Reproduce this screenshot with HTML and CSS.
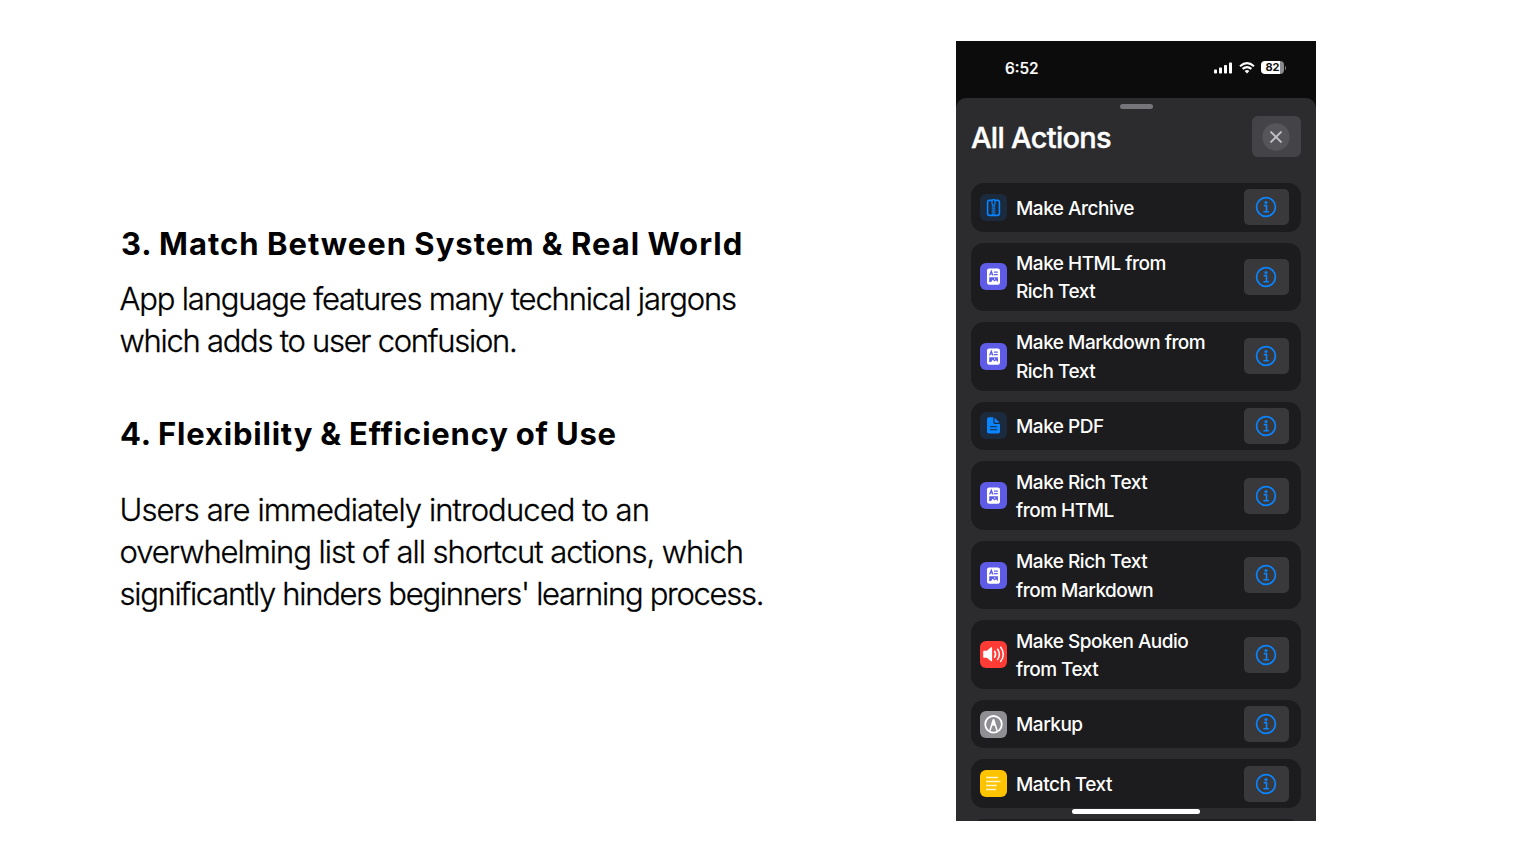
FILE: index.html
```html
<!DOCTYPE html>
<html lang="en">
<head>
<meta charset="utf-8">
<title>Heuristic evaluation</title>
<link rel="stylesheet" href="styles.css">
</head>
<body>
<svg class="defs" aria-hidden="true">
  <symbol id="info" viewBox="0 0 22 22"><circle cx="11" cy="11" r="9.400" fill="none" stroke="#0a84ff" stroke-width="1.700"/><circle cx="11" cy="6.400" r="1.500" fill="#0a84ff"/><path d="M8.800 9.600h2.700v6M8.400 15.700h5.500" fill="none" stroke="#0a84ff" stroke-width="1.600"/></symbol>
  <symbol id="zip" viewBox="0 0 27 27"><rect x="7.600" y="6.400" width="11.800" height="15" rx="1.800" fill="none" stroke="#0a84ff" stroke-width="1.600"/><path d="M13.500 11.500v9.500" stroke="#0a84ff" stroke-width="3.600" stroke-dasharray="1.200 .8"/><rect x="12" y="5.700" width="3" height="5.400" rx="1.500" fill="#1b2a3d" stroke="#0a84ff" stroke-width="1.200"/></symbol>
  <symbol id="rich" viewBox="0 0 27 27"><rect x="7" y="5.400" width="13" height="16.400" rx="2.200" fill="#fff"/><path d="M9.600 12.400l1.700-4.200 1.700 4.200M10.200 11h2.200M14 9.200h3.800M14 11.600h3.800" fill="none" stroke="#5e5ce6" stroke-width="1.200"/><path d="M9.200 14.200h8.700v5.100l-1.900-2.100-1.400 1.200-1.900-1.700-1.600 2.300H9.200z" fill="#5e5ce6"/><circle cx="14.600" cy="15.900" r=".7" fill="#fff"/></symbol>
  <symbol id="pdf" viewBox="0 0 27 27"><path d="M8.800 5.200h4.500v5.400a1.400 1.400 0 0 0 1.400 1.400H20v7.800a1.800 1.800 0 0 1-1.800 1.800H8.800A1.800 1.800 0 0 1 7 19.800V7a1.800 1.800 0 0 1 1.800-1.800z" fill="#0a84ff"/><path d="M14.500 5.400l5.200 5.400h-4.500a.7.7 0 0 1-.7-.7z" fill="#0a84ff"/><path d="M10 14.700h7M10 17.800h7" stroke="#1b2a3d" stroke-width="1.100"/></symbol>
  <symbol id="audio" viewBox="0 0 27 27"><path d="M3.200 10.500q0-.8.8-.8h2.800l4-3.300q1.300-.8 1.300.6v12.400q0 1.400-1.300.6l-4-3.300H4q-.8 0-.8-.8z" fill="#fff"/><path d="M14.600 10.300q2.100 3 0 6M17.600 8.200q3.700 5 0 10.200M20.700 6.200q5.300 7 0 14.200" fill="none" stroke="#fff" stroke-width="1.500" stroke-linecap="round"/></symbol>
  <symbol id="markup" viewBox="0 0 27 27"><circle cx="13.500" cy="13.300" r="8.300" fill="none" stroke="#fff" stroke-width="1.800"/><path d="M9.900 19.800l3.300-10.800h.6l3.300 10.800" fill="none" stroke="#fff" stroke-width="1.500"/><path d="M11.300 15.500l2.200-8 2.200 8-2.200-1.200z" fill="#fff"/></symbol>
  <symbol id="text" viewBox="0 0 27 27"><path d="M6 7.500h12M6 11.500h14.500M6 15.500h11M6 19.500h10" stroke="#fff6d0" stroke-width="1.700"/></symbol>
</svg>
<main class="slide">
  <section class="notes">
    <h2 class="head head-match">3. Match Between System &amp; Real World</h2>
    <p class="para"><span class="line l1">App language features many technical jargons</span><span class="line l2">which adds to user confusion.</span></p>
    <h2 class="head head-flex">4. Flexibility &amp; Efficiency of Use</h2>
    <p class="para para-last"><span class="line l3">Users are immediately introduced to an</span><span class="line l4">overwhelming list of all shortcut actions, which</span><span class="line l5">significantly hinders beginners' learning process.</span></p>
  </section>
  <section class="phone">
    <header class="status">
      <span class="time">6:52</span>
      <div class="indicators">
        <svg class="signal" viewBox="0 0 18 12"><rect y="7.500" width="3" height="4" rx=".8"/><rect x="5" y="5.500" width="3" height="6" rx=".8"/><rect x="10" y="3" width="3" height="8.500" rx=".8"/><rect x="15" y=".5" width="3" height="11" rx=".8"/></svg>
        <svg class="wifi" viewBox="0 0 16 12"><path d="M1 4.200q7-6 14 0M3.600 6.900q4.400-3.700 8.800 0" fill="none" stroke="#fff" stroke-width="2.100"/><path d="M5.600 9q2.400-1.800 4.800 0L8 11.500z"/></svg>
        <div class="battery"><span class="level">82</span></div><i class="cap"></i>
      </div>
    </header>
    <div class="sheet">
      <i class="grabber"></i>
      <div class="title-row">
        <h1 class="title">All Actions</h1>
        <button class="close"><svg viewBox="0 0 28 28"><circle cx="14" cy="14" r="13.700" fill="#55555a"/><path d="M9.100 9.100l9.800 9.800M18.900 9.100l-9.800 9.800" stroke="#c0c0c6" stroke-width="2" stroke-linecap="round"/></svg></button>
      </div>
      <div class="list">
        <div class="row"><svg class="icon navy"><use href="#zip"/></svg><span class="label">Make Archive</span><button class="info"><svg><use href="#info"/></svg></button></div>
        <div class="row tall"><svg class="icon purple"><use href="#rich"/></svg><span class="label">Make HTML from<br>Rich Text</span><button class="info"><svg><use href="#info"/></svg></button></div>
        <div class="row tall"><svg class="icon purple"><use href="#rich"/></svg><span class="label">Make Markdown from<br>Rich Text</span><button class="info"><svg><use href="#info"/></svg></button></div>
        <div class="row"><svg class="icon navy"><use href="#pdf"/></svg><span class="label">Make PDF</span><button class="info"><svg><use href="#info"/></svg></button></div>
        <div class="row tall"><svg class="icon purple"><use href="#rich"/></svg><span class="label">Make Rich Text<br>from HTML</span><button class="info"><svg><use href="#info"/></svg></button></div>
        <div class="row tall"><svg class="icon purple"><use href="#rich"/></svg><span class="label">Make Rich Text<br>from Markdown</span><button class="info"><svg><use href="#info"/></svg></button></div>
        <div class="row tall"><svg class="icon red"><use href="#audio"/></svg><span class="label">Make Spoken Audio<br>from Text</span><button class="info"><svg><use href="#info"/></svg></button></div>
        <div class="row"><svg class="icon gray"><use href="#markup"/></svg><span class="label">Markup</span><button class="info"><svg><use href="#info"/></svg></button></div>
        <div class="row"><svg class="icon yellow"><use href="#text"/></svg><span class="label">Match Text</span><button class="info"><svg><use href="#info"/></svg></button></div>
        <div class="row"></div>
      </div>
    </div>
    <i class="home-bar"></i>
  </section>
</main>
</body>
</html>
```
FILE: styles.css
```css
* { box-sizing: border-box; }
body { margin: 0; background: #fff; font-family: Inter, "Liberation Sans", sans-serif; }
h1, h2, p { margin: 0; }
button { border: 0; padding: 0; font: inherit; }
.defs { display: none; }
.slide { display: flex; width: 1524px; height: 862px; overflow: hidden; padding: 41px 0 0 119px; }
.notes { width: 837px; flex: none; padding-top: 182px; color: #000; }
.head { font-size: 31px; line-height: 42px; font-weight: 700; white-space: nowrap; font-variant-ligatures: none; word-spacing: -1px; }
.head-match { letter-spacing: 1px; padding-left: 2px; }
.head-flex { margin-top: 51px; letter-spacing: 0.800px; padding-left: 1px; }
.para { font-size: 31px; line-height: 42px; font-weight: 300; padding-top: 13px; -webkit-text-stroke: 0.300px #000; }
.para-last { padding-top: 34px; }
.line { display: block; white-space: nowrap; padding-left: 0.500px; }
.l1 { letter-spacing: -1.160px; }
.l2 { letter-spacing: -1.270px; }
.l3 { letter-spacing: -0.910px; }
.l4 { letter-spacing: -1.030px; }
.l5 { letter-spacing: -1.280px; }

.phone { position: relative; width: 360px; height: 780px; flex: none; overflow: hidden; background: #0c0c0c; color: #fff; }
.status { display: flex; justify-content: space-between; align-items: center; height: 57px; padding: 0 30px 4px 49px; }
.time { font-size: 15.500px; font-weight: 500; padding-top: 1px; -webkit-text-stroke: 0.200px #fff; }
.indicators { display: flex; align-items: center; }
.indicators svg { fill: #fff; }
.signal { width: 18px; height: 12px; margin-right: 7px; }
.wifi { width: 16px; height: 12px; margin-right: 6px; }
.battery { width: 23px; height: 13px; border-radius: 4px; background: linear-gradient(90deg, #fff 82%, #8b8b8b 82%); }
.level { display: block; color: #111; font-size: 11px; line-height: 13px; font-weight: 700; text-align: center; }
.cap { width: 1.500px; height: 4px; margin-left: 0.500px; border-radius: 0 2px 2px 0; background: #777; }

.sheet { height: 723px; border-radius: 10px 10px 0 0; background: #2c2c2e; padding: 6px 15px 0; overflow: hidden; }
.grabber { display: block; width: 33px; height: 4.500px; margin: 0 auto; border-radius: 3px; background: #75757a; }
.title-row { display: flex; justify-content: space-between; align-items: center; height: 41px; margin-top: 7.500px; }
.title { font-size: 29px; line-height: 36px; font-weight: 500; letter-spacing: -0.700px; padding-top: 2px; -webkit-text-stroke: 0.400px #fff; }
.close { display: flex; align-items: center; justify-content: center; width: 49.500px; height: 41px; border-radius: 6px; background: #444448; }
.close svg { width: 28px; height: 28px; }
.list { display: flex; flex-direction: column; gap: 11.100px; margin-top: 26px; }
.row { display: flex; align-items: center; flex: none; height: 48.600px; padding: 0 12px 0 9px; border-radius: 13px; background: #1c1c1e; }
.tall { height: 68.400px; }
.icon { width: 27px; height: 27px; flex: none; border-radius: 6px; }
.navy { background: #1b2a3d; }
.purple { background: #5e5ce6; }
.red { background: #ff3b35; }
.gray { background: #8e8e93; }
.yellow { background: #ffc300; }
.label { flex: 1; margin-left: 9px; padding-top: 3px; font-size: 19px; line-height: 28.500px; font-weight: 500; letter-spacing: -0.500px; white-space: nowrap; }
.info { display: flex; align-items: center; justify-content: center; width: 45.500px; height: 36px; border-radius: 5px; background: #39393c; }
.info svg { width: 22px; height: 22px; }
.home-bar { position: absolute; left: 116px; top: 768px; width: 128px; height: 5px; border-radius: 3px; background: #fff; }
```
